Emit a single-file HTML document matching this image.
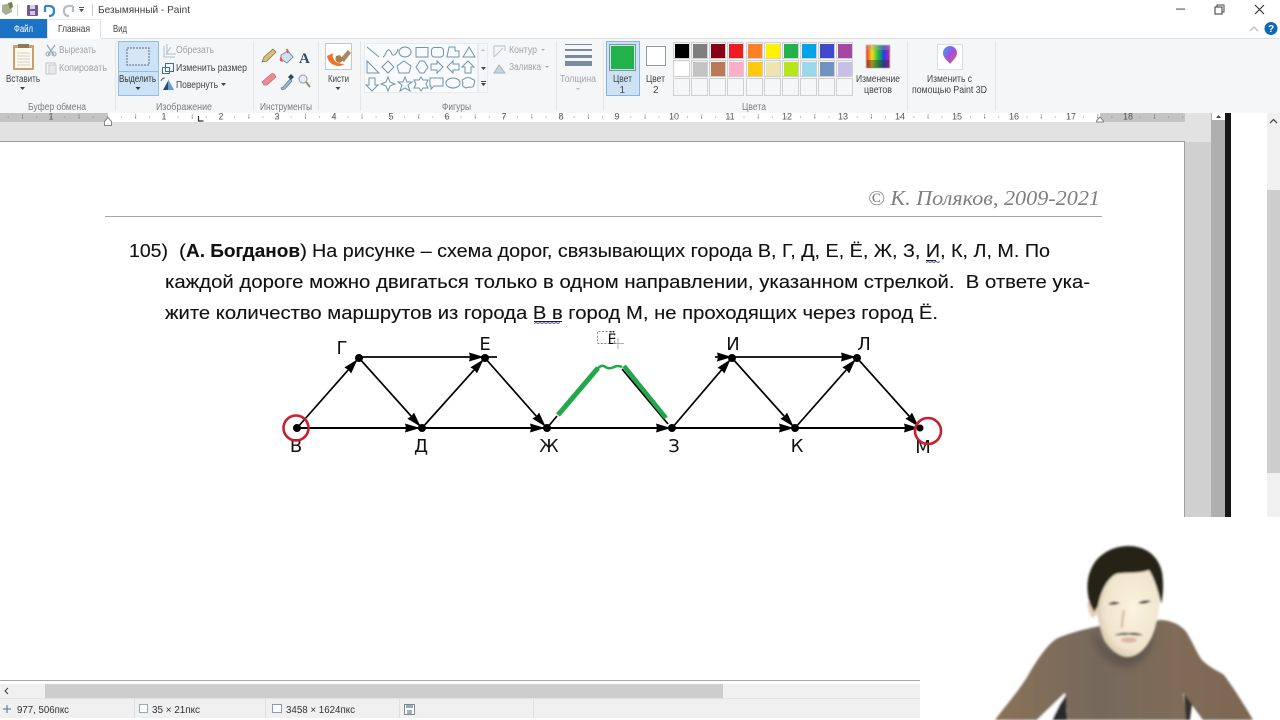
<!DOCTYPE html>
<html lang="ru"><head><meta charset="utf-8"><title>Безымянный - Paint</title>
<style>
html,body{margin:0;padding:0;background:#fff;width:1280px;height:720px;overflow:hidden}
svg{display:block}
text{white-space:pre}
.u{font-family:"Liberation Sans",sans-serif;font-size:10px;fill:#444}
.d{font-family:"Liberation Sans",sans-serif;font-size:10px;fill:#a4a4a4}
.g{font-family:"Liberation Sans",sans-serif;font-size:10px;fill:#7c7c7c}
.t{font-family:"Liberation Sans",sans-serif;font-size:18.5px;fill:#111;stroke:#111;stroke-width:.12}
.n{font-family:"DejaVu Sans",sans-serif;font-size:18px;fill:#111;text-anchor:middle}
.r{font-family:"Liberation Sans",sans-serif;font-size:9px;fill:#555;text-anchor:middle}
.i{fill:none;stroke:#8fa6b8;stroke-width:1}
</style></head><body>
<svg width="1280" height="720" viewBox="0 0 1280 720" xmlns="http://www.w3.org/2000/svg">
<defs>
<marker id="a" markerUnits="userSpaceOnUse" viewBox="0 0 15 9" refX="14" refY="4.5" markerWidth="15" markerHeight="9" orient="auto"><path d="M0 0L15 4.5L0 9L1 4.5Z" fill="#000"/></marker>
<filter id="b" x="-5%" y="-5%" width="110%" height="110%"><feGaussianBlur stdDeviation="1"/></filter>
<filter id="s" x="-30%" y="-30%" width="160%" height="160%"><feGaussianBlur stdDeviation="4"/></filter>
<filter id="q"><feGaussianBlur stdDeviation="0.35"/></filter>
<linearGradient id="sw" x1="0" y1="0" x2="1" y2="0"><stop offset="0" stop-color="#8a7258"/><stop offset=".4" stop-color="#75695c"/><stop offset=".7" stop-color="#806c58"/><stop offset="1" stop-color="#7b6651"/></linearGradient>
<radialGradient id="fc" cx=".58" cy=".45" r=".7"><stop offset="0" stop-color="#fbf3e0"/><stop offset=".65" stop-color="#f0e5cd"/><stop offset="1" stop-color="#c4b498"/></radialGradient>
<linearGradient id="rb" x1="0" y1="0" x2="1" y2="0"><stop offset="0" stop-color="#ff2020"/><stop offset=".25" stop-color="#f0e020"/><stop offset=".5" stop-color="#20c040"/><stop offset=".75" stop-color="#2040e0"/><stop offset="1" stop-color="#d020a0"/></linearGradient>
<linearGradient id="p3" x1="0" y1="0" x2="1" y2="1"><stop offset="0" stop-color="#30a8f0"/><stop offset=".5" stop-color="#a050e0"/><stop offset="1" stop-color="#f06050"/></linearGradient>
</defs>

<rect width="1280" height="720" fill="#fff"/>

<!-- title bar -->
<g filter="url(#q)">
<path d="M2 5l9-2 1 9-6 3-4-3z" fill="#a8b090"/><path d="M8 3l4-1 1 5-3 2z" fill="#70804c"/>
<rect x="17" y="4" width="1" height="12" fill="#ccc"/>
<rect x="27" y="5" width="11" height="11" rx="1" fill="#6f5a98"/><rect x="30" y="5" width="5" height="4" fill="#d8d4e6"/><rect x="30" y="11" width="5" height="4" fill="#cfc8e0"/>
<path d="M45 6v6M45 6h4q5 0 5 5t-5 5" fill="none" stroke="#2f86cc" stroke-width="2.2"/>
<path d="M73 6v6M73 6h-4q-5 0-5 5t5 5" fill="none" stroke="#b8bec4" stroke-width="2.2"/>
<path d="M79 9h5l-2.500 3z" fill="#555"/><rect x="79" y="7" width="5" height="1" fill="#555"/>
<rect x="92" y="4" width="1" height="12" fill="#ccc"/>
<text x="98" y="13" class="u" style="font-size:10.500px;fill:#404040" textLength="92" lengthAdjust="spacingAndGlyphs">Безымянный - Paint</text>
<rect x="1176" y="8.500" width="9" height="1.200" fill="#666"/>
<rect x="1215" y="7" width="7" height="7" fill="none" stroke="#444" stroke-width="1.100"/><path d="M1217 7V5h7v7h-2" fill="none" stroke="#444"/>
<path d="M1255 5l9 9M1264 5l-9 9" stroke="#333" stroke-width="1.100"/>
<path d="M1250 31l4-4 4 4" fill="none" stroke="#c4c4c4" stroke-width="1.500"/>
<circle cx="1271" cy="28.500" r="6.500" fill="#1168b8"/><text x="1271" y="32" text-anchor="middle" style="font:bold 10px 'Liberation Sans',sans-serif;fill:#fff">?</text>

<!-- tabs -->
<rect x="0" y="19" width="47" height="19" fill="#1c72c4"/>
<text x="14" y="32" class="u" style="fill:#fff" textLength="19" lengthAdjust="spacingAndGlyphs">Файл</text>
<text x="58" y="32" class="u" textLength="32" lengthAdjust="spacingAndGlyphs">Главная</text>
<text x="113" y="32" class="u" textLength="14" lengthAdjust="spacingAndGlyphs">Вид</text>

<!-- ribbon -->
<rect x="0" y="38" width="1280" height="75" fill="#f4f6f7"/>
<rect x="0" y="38" width="47" height="1" fill="#dcdedf"/><rect x="101" y="38" width="1179" height="1" fill="#dcdedf"/>
<rect x="47" y="38" width="54" height="1" fill="#fff"/>
<rect x="47" y="19" width="1" height="19" fill="#e0e2e3"/><rect x="100" y="19" width="1" height="19" fill="#e0e2e3"/>
<rect x="47" y="19" width="54" height="1" fill="#e8e9ea"/>
<g fill="#e4e6e8">
<rect x="115" y="41" width="1" height="70"/><rect x="253" y="41" width="1" height="70"/><rect x="318" y="41" width="1" height="70"/><rect x="360" y="41" width="1" height="70"/><rect x="556" y="41" width="1" height="70"/><rect x="603" y="41" width="1" height="70"/><rect x="907" y="41" width="1" height="70"/><rect x="995" y="41" width="1" height="70"/>
</g>

<!-- clipboard -->
<rect x="13" y="45" width="21" height="25" rx="1" fill="#c9a06c"/><rect x="15" y="48" width="17" height="20" fill="#fbf8f0"/>
<rect x="18" y="44" width="11" height="4" fill="#8a7a60"/>
<path d="M17 53h13M17 56h13M17 59h13M17 62h13M17 65h13" stroke="#d5d0c4"/>
<text x="6" y="82" class="u" textLength="34" lengthAdjust="spacingAndGlyphs">Вставить</text>
<path d="M20 87h5l-2.500 3z" fill="#444"/>
<path d="M47 45l7 10M55 45l-7 10" stroke="#9aa6b2" stroke-width="1.300" fill="none"/><circle cx="48" cy="54" r="2" fill="none" stroke="#9aa6b2"/><circle cx="54" cy="54" r="2" fill="none" stroke="#9aa6b2"/>
<text x="59" y="53" class="d" textLength="37" lengthAdjust="spacingAndGlyphs">Вырезать</text>
<rect x="46" y="63" width="9" height="11" fill="#f4f4f4" stroke="#c0c4c8"/><rect x="49" y="65" width="7" height="9" fill="#e6e8ea" stroke="#c8ccd0"/>
<text x="59" y="71" class="d" textLength="48" lengthAdjust="spacingAndGlyphs">Копировать</text>
<text x="28" y="110" class="g" textLength="58" lengthAdjust="spacingAndGlyphs">Буфер обмена</text>

<!-- select -->
<rect x="118.500" y="41.500" width="40" height="54" fill="#cce2f6" stroke="#96bce0"/>
<rect x="119" y="71" width="39" height="1" fill="#96bce0"/>
<rect x="127" y="48" width="22" height="17" fill="#d6e6f6" stroke="#5a6c80" stroke-dasharray="2 1"/>
<text x="119" y="82" class="u" style="fill:#333" textLength="37" lengthAdjust="spacingAndGlyphs">Выделить</text>
<path d="M135.500 87h5l-2.500 3z" fill="#333"/>
<path d="M164 46v11h11M167 44v10h9M171 47l-5 7" class="i" stroke-opacity=".7"/>
<text x="176" y="53" class="d" textLength="38" lengthAdjust="spacingAndGlyphs">Обрезать</text>
<rect x="162.500" y="67.500" width="7" height="6" fill="#fff" stroke="#3f6fa0"/><rect x="165.500" y="63.500" width="8" height="8" fill="none" stroke="#3f6fa0"/>
<text x="176" y="71" class="u" textLength="71" lengthAdjust="spacingAndGlyphs">Изменить размер</text>
<path d="M163 90l5-9v9z" fill="#30486e"/><path d="M168 90v-11l6 11z" fill="#5f9ad4"/><path d="M161 81q1-3 4-3" fill="none" stroke="#555"/>
<text x="176" y="88" class="u" textLength="42" lengthAdjust="spacingAndGlyphs">Повернуть</text>
<path d="M221 83h5l-2.500 3z" fill="#444"/>
<text x="156" y="110" class="g" textLength="56" lengthAdjust="spacingAndGlyphs">Изображение</text>

<!-- tools -->
<path d="M262 62l2-5 9-8 3 3-9 9z" fill="#d8c070" stroke="#807860" stroke-width=".8"/>
<path d="M281 55l7-4 5 6-6 6-6-4z" fill="#cfe0f0" stroke="#7a94ac"/><path d="M281 56q-2 3-1 5l3 1z" fill="#e85860"/><path d="M287 49l1 4" stroke="#d06068" stroke-width="2"/>
<text x="299" y="63" style="font:bold 15px 'Liberation Serif',serif;fill:#324a6a">A</text>
<path d="M262 82l9-8q3-1 4 1l1 2-9 8h-3z" fill="#ee8a94" stroke="#c07078" stroke-width=".7"/>
<path d="M281 88l2-1 7-8 2 2-7 8-3 1z" fill="#9fb6cc" stroke="#607890" stroke-width=".7"/><path d="M288 77l3-3 3 3-3 3z" fill="#2a4868"/>
<circle cx="303" cy="79" r="4" fill="#e6eef4" stroke="#8a9cac"/><path d="M306 82l4 5" stroke="#9a8a6c" stroke-width="2"/>
<text x="260" y="110" class="g" textLength="52" lengthAdjust="spacingAndGlyphs">Инструменты</text>

<!-- brushes -->
<rect x="325.500" y="43.500" width="26" height="26" fill="#fff" stroke="#c4c8cc"/>
<path d="M327 56q2 10 13 10l5-2q-8 0-11-4-2-4-1-7z" fill="#e8742c"/>
<path d="M340 59l8-9 3 3-7 9z" fill="#a88860"/><path d="M336 56q-2 6 4 7l3-3-3-5z" fill="#b07a48"/>
<text x="328" y="82" class="u" textLength="21" lengthAdjust="spacingAndGlyphs">Кисти</text>
<path d="M335.500 87h5l-2.500 3z" fill="#444"/>

<!-- shapes -->
<rect x="364.500" y="43.500" width="113" height="49" fill="#f8fafb" stroke="#e8eaec"/>
<g class="i" stroke="#6f93b4" fill="none" style="stroke:#6f93b4">
<path d="M367 47l12 10"/><path d="M383 57c3-1 3-8 6-7s2 6 5 5 4-6 4-6"/><ellipse cx="405" cy="52" rx="6" ry="5"/><rect x="416" y="47.500" width="12" height="9.500"/><rect x="431.500" y="47.500" width="12" height="9.500" rx="3"/><path d="M447 57l2-10h6v4h4v6z"/><path d="M463 57l6-10 6 10z"/>
<path d="M367 73V61l12 12z"/><path d="M388 61l6 6-6 6-6-6z"/><path d="M404 61l7 5-2 7h-10l-2-7z"/><path d="M420 61h4l4 6-4 6h-4l-4-6z"/><path d="M431 64h6v-3l6 6-6 6v-3h-6z"/><path d="M459 64h-6v-3l-6 6 6 6v-3h6z"/><path d="M468 61l6 6h-3v6h-6v-6h-3z"/>
<path d="M372 91l-6-6h3v-7h6v7h3z"/><path d="M388 77l2 5 5 2-5 2-2 5-2-5-5-2 5-2z"/><path d="M405 77l2 5h5l-4 3 2 6-5-3-5 3 2-6-4-3h5z"/><path d="M421 77l2 3h5l-2 4 2 4h-5l-2 3-2-3h-5l2-4-2-4h5z"/><path d="M430 78h13v8h-9l-3 3v-3h-1z"/><ellipse cx="453" cy="83" rx="7" ry="5"/><path d="M464 79q4-3 8 0 4 1 2 5 0 4-5 3l-3 1q-5-2-3-5-2-3 1-4z"/>
</g>
<path d="M481 51l2-2 2 2z" fill="#b8bcc0"/><path d="M481 67h5l-2.500 3z" fill="#444"/><path d="M481 81h5v1h-5zM481 83h5l-2.500 3z" fill="#444"/>
<rect x="478.500" y="43.500" width="9" height="49" fill="none" stroke="#e8eaec"/>
<path d="M494 57V46h11v5M494 57l9-9" class="i" style="stroke:#b8c4cc"/>
<text x="509" y="53" class="d" textLength="28" lengthAdjust="spacingAndGlyphs">Контур</text>
<path d="M541 49h4l-2 2z" fill="#b0b0b0"/>
<path d="M494 73l5-8 6 8z" fill="#c8d4e4" stroke="#a4b4c6"/>
<text x="509" y="70" class="d" textLength="32" lengthAdjust="spacingAndGlyphs">Заливка</text>
<path d="M545 66h4l-2 2z" fill="#b0b0b0"/>
<text x="442" y="110" class="g" textLength="29" lengthAdjust="spacingAndGlyphs">Фигуры</text>

<!-- thickness -->
<rect x="565" y="44" width="27" height="1" fill="#7a8aa4"/><rect x="565" y="49" width="27" height="2" fill="#7a8aa4"/><rect x="565" y="55" width="27" height="3" fill="#7a8aa4"/><rect x="565" y="61" width="27" height="5" fill="#7a8aa4"/>
<text x="560" y="82" class="d" textLength="36" lengthAdjust="spacingAndGlyphs">Толщина</text>
<path d="M576 88h4l-2 2z" fill="#b8b8b8"/>

<!-- colours -->
<rect x="606.500" y="41.500" width="33" height="54" fill="#cde2f5" stroke="#8ab4d8"/>
<rect x="609.500" y="44.500" width="26" height="26" fill="#cde2f5" stroke="#7a9c90"/>
<rect x="611" y="46" width="23" height="23" fill="#22b14c"/>
<text x="613" y="82" class="u" textLength="19" lengthAdjust="spacingAndGlyphs">Цвет</text><text x="619.500" y="93" class="u">1</text>
<rect x="646.500" y="46.500" width="19" height="19" fill="#fff" stroke="#9a9a9a"/>
<text x="646" y="82" class="u" textLength="19" lengthAdjust="spacingAndGlyphs">Цвет</text><text x="653" y="93" class="u">2</text>

<g stroke="#d0d0d0" fill="#f4f6f7">
<rect x="673.500" y="42.500" width="16" height="16"/><rect x="691.500" y="42.500" width="16" height="16"/><rect x="709.500" y="42.500" width="16" height="16"/><rect x="727.500" y="42.500" width="16" height="16"/><rect x="746.500" y="42.500" width="16" height="16"/><rect x="764.500" y="42.500" width="16" height="16"/><rect x="782.500" y="42.500" width="16" height="16"/><rect x="800.500" y="42.500" width="16" height="16"/><rect x="818.500" y="42.500" width="16" height="16"/><rect x="836.500" y="42.500" width="16" height="16"/>
<rect x="673.500" y="60.500" width="16" height="16"/><rect x="691.500" y="60.500" width="16" height="16"/><rect x="709.500" y="60.500" width="16" height="16"/><rect x="727.500" y="60.500" width="16" height="16"/><rect x="746.500" y="60.500" width="16" height="16"/><rect x="764.500" y="60.500" width="16" height="16"/><rect x="782.500" y="60.500" width="16" height="16"/><rect x="800.500" y="60.500" width="16" height="16"/><rect x="818.500" y="60.500" width="16" height="16"/><rect x="836.500" y="60.500" width="16" height="16"/>
<rect x="673.500" y="78.500" width="16" height="17"/><rect x="691.500" y="78.500" width="16" height="17"/><rect x="709.500" y="78.500" width="16" height="17"/><rect x="727.500" y="78.500" width="16" height="17"/><rect x="746.500" y="78.500" width="16" height="17"/><rect x="764.500" y="78.500" width="16" height="17"/><rect x="782.500" y="78.500" width="16" height="17"/><rect x="800.500" y="78.500" width="16" height="17"/><rect x="818.500" y="78.500" width="16" height="17"/><rect x="836.500" y="78.500" width="16" height="17"/>
</g>
<rect x="675" y="44" width="14" height="14" fill="#000"/><rect x="693" y="44" width="14" height="14" fill="#7f7f7f"/><rect x="711" y="44" width="14" height="14" fill="#880015"/><rect x="729" y="44" width="14" height="14" fill="#ed1c24"/><rect x="748" y="44" width="14" height="14" fill="#ff7f27"/><rect x="766" y="44" width="14" height="14" fill="#fff200"/><rect x="784" y="44" width="14" height="14" fill="#22b14c"/><rect x="802" y="44" width="14" height="14" fill="#00a2e8"/><rect x="820" y="44" width="14" height="14" fill="#3f48cc"/><rect x="838" y="44" width="14" height="14" fill="#a349a4"/>
<rect x="675" y="62" width="14" height="14" fill="#fff"/><rect x="693" y="62" width="14" height="14" fill="#c3c3c3"/><rect x="711" y="62" width="14" height="14" fill="#b97a57"/><rect x="729" y="62" width="14" height="14" fill="#ffaec9"/><rect x="748" y="62" width="14" height="14" fill="#ffc90e"/><rect x="766" y="62" width="14" height="14" fill="#efe4b0"/><rect x="784" y="62" width="14" height="14" fill="#b5e61d"/><rect x="802" y="62" width="14" height="14" fill="#99d9ea"/><rect x="820" y="62" width="14" height="14" fill="#7092be"/><rect x="838" y="62" width="14" height="14" fill="#c8bfe7"/>
<text x="742" y="110" class="g" textLength="24" lengthAdjust="spacingAndGlyphs">Цвета</text>

<!-- edit colours -->
<rect x="866" y="45" width="24" height="23" fill="url(#rb)" stroke="#c8c4b8"/>
<rect x="867" y="45" width="22" height="5" fill="#aaa" opacity=".35"/><rect x="867" y="60" width="22" height="8" fill="#333" opacity=".45"/>
<text x="856" y="82" class="u" textLength="44" lengthAdjust="spacingAndGlyphs">Изменение</text>
<text x="864" y="93" class="u" textLength="28" lengthAdjust="spacingAndGlyphs">цветов</text>
<!-- paint 3d -->
<rect x="937.500" y="44.500" width="25" height="25" fill="#fff" stroke="#dcdcdc"/>
<path d="M950 64c-2-3-7-6-7-11a7 7 0 0 1 14 0c0 5-5 8-7 11z" fill="url(#p3)"/>
<text x="927" y="82" class="u" textLength="45" lengthAdjust="spacingAndGlyphs">Изменить с</text>
<text x="912" y="93" class="u" textLength="75" lengthAdjust="spacingAndGlyphs">помощью Paint 3D</text>

<!-- workspace -->
<rect x="0" y="113" width="1185" height="29" fill="#e2e2e2"/>
<rect x="0" y="113" width="1185" height="9" fill="#c4c4c4"/>
<rect x="108" y="113" width="992" height="9" fill="#fff"/>
<line x1="7.700" y1="117" x2="1184" y2="117" stroke="#888" stroke-width="1" stroke-dasharray="1 13.150"/>
<line x1="22" y1="115" x2="1184" y2="115" stroke="#666" stroke-width="1" stroke-dasharray="1 55.600"/>
<line x1="22" y1="118" x2="1184" y2="118" stroke="#666" stroke-width="1" stroke-dasharray="1 55.600"/>
<g class="r">
<text x="51" y="119.500" class="r">1</text><text x="164" y="119.500" class="r">1</text><text x="221" y="119.500" class="r">2</text><text x="277" y="119.500" class="r">3</text><text x="334" y="119.500" class="r">4</text><text x="391" y="119.500" class="r">5</text><text x="447" y="119.500" class="r">6</text><text x="504" y="119.500" class="r">7</text><text x="561" y="119.500" class="r">8</text><text x="617" y="119.500" class="r">9</text><text x="674" y="119.500" class="r">10</text><text x="730" y="119.500" class="r">11</text><text x="787" y="119.500" class="r">12</text><text x="843" y="119.500" class="r">13</text><text x="900" y="119.500" class="r">14</text><text x="957" y="119.500" class="r">15</text><text x="1014" y="119.500" class="r">16</text><text x="1071" y="119.500" class="r">17</text><text x="1128" y="119.500" class="r">18</text>
</g>
<path d="M104.500 125.500v-4l3.500-4 3.500 4v4z" fill="#fff" stroke="#888"/>
<path d="M1096.500 122v-1l3.500-4 3.500 4v1z" fill="#fff" stroke="#888"/>
<path d="M198.500 116v5h5" fill="none" stroke="#333" stroke-width="1.200"/>

<rect x="0" y="142" width="1184" height="375" fill="#fff"/>
<rect x="0" y="141" width="1185" height="1" fill="#9c9c9c"/>
<rect x="1184" y="141" width="1" height="376" fill="#a0a0a0"/>
<rect x="1185" y="142" width="26" height="375" fill="#d0d0d0"/>
<rect x="1185" y="113" width="26" height="29" fill="#e2e2e2"/>
<rect x="1211" y="113" width="14" height="404" fill="#afafaf"/>
<rect x="1212" y="113" width="13" height="7" fill="#fff"/><path d="M1216 118l2.500-3 2.500 3z" fill="#444"/>
<rect x="1225" y="113" width="6" height="404" fill="#161616"/>
<rect x="1267" y="113" width="13" height="404" fill="#f0f0f0"/>
<rect x="1267" y="190" width="13" height="283" fill="#cdcdcd"/>
<path d="M1270 123l3.500-3.500 3.500 3.500" fill="none" stroke="#505050" stroke-width="1.300"/>
</g>

<!-- document -->
<text x="868" y="205" style="font:italic 21px 'Liberation Serif',serif;fill:#7f7f7f" textLength="232" lengthAdjust="spacingAndGlyphs">© К. Поляков, 2009-2021</text>
<rect x="105" y="216" width="997" height="1" fill="#a6a6a6"/>
<text x="129" y="257" class="t" textLength="39" lengthAdjust="spacingAndGlyphs">105)</text>
<text x="179" y="257" class="t" textLength="7" lengthAdjust="spacingAndGlyphs">(</text>
<text x="186" y="257" class="t" style="font-weight:bold" textLength="114" lengthAdjust="spacingAndGlyphs">А. Богданов</text>
<text x="300" y="257" class="t" textLength="7" lengthAdjust="spacingAndGlyphs">)</text>
<text x="312" y="257" class="t" textLength="738" lengthAdjust="spacingAndGlyphs">На рисунке – схема дорог, связывающих города В, Г, Д, Е, Ё, Ж, З, И, К, Л, М. По</text>
<text x="165" y="288" class="t" textLength="925" lengthAdjust="spacingAndGlyphs">каждой дороге можно двигаться только в одном направлении, указанном стрелкой.  В ответе ука-</text>
<text x="165" y="319" class="t" textLength="773" lengthAdjust="spacingAndGlyphs">жите количество маршрутов из города В в город М, не проходящих через город Ё.</text>
<path d="M534 321.500h28" stroke="#222" stroke-width="1"/>
<path d="M534 323.500l2-1 2 1 2-1 2 1 2-1 2 1 2-1 2 1 2-1 2 1 2-1 2 1 2-1" fill="none" stroke="#3a3ab0" stroke-width=".9"/>
<path d="M926 260.500h10" stroke="#222"/>
<path d="M926 262.500l2-1 2 1 2-1 2 1 2-1 2 1 2-1" fill="none" stroke="#3a3ab0" stroke-width=".9"/>

<!-- graph -->
<g stroke="#000" fill="none" stroke-width="1.700">
<line x1="297" y1="428" x2="357" y2="360" marker-end="url(#a)"/>
<line x1="297" y1="428" x2="419" y2="428" marker-end="url(#a)" stroke-width="2"/>
<line x1="359" y1="358" x2="420" y2="426" marker-end="url(#a)"/>
<line x1="359" y1="357" x2="483" y2="357" marker-end="url(#a)"/>
<line x1="483" y1="357" x2="497" y2="357"/>
<line x1="422" y1="428" x2="483" y2="360" marker-end="url(#a)"/>
<line x1="485" y1="358" x2="545" y2="426" marker-end="url(#a)"/>
<line x1="422" y1="428" x2="544" y2="428" marker-end="url(#a)" stroke-width="2"/>
<line x1="547" y1="428" x2="670" y2="428" marker-end="url(#a)" stroke-width="2"/>
<line x1="547" y1="428" x2="557" y2="416"/>
<line x1="622" y1="369" x2="668" y2="424"/>
<line x1="672" y1="428" x2="730" y2="360" marker-end="url(#a)"/>
<line x1="715" y1="357" x2="731" y2="357" marker-end="url(#a)"/>
<line x1="732" y1="357" x2="855" y2="357" marker-end="url(#a)"/>
<line x1="732" y1="358" x2="793" y2="426" marker-end="url(#a)"/>
<line x1="672" y1="428" x2="793" y2="428" marker-end="url(#a)" stroke-width="2"/>
<line x1="795" y1="428" x2="855" y2="360" marker-end="url(#a)"/>
<line x1="795" y1="428" x2="918" y2="428" marker-end="url(#a)" stroke-width="2"/>
<line x1="857" y1="358" x2="918" y2="426" marker-end="url(#a)"/>
</g>
<g fill="#000"><circle cx="297" cy="428" r="4"/><circle cx="359" cy="358" r="4"/><circle cx="422" cy="428" r="4"/><circle cx="485" cy="358" r="4"/><circle cx="547" cy="428" r="4"/><circle cx="672" cy="428" r="4"/><circle cx="732" cy="358" r="4"/><circle cx="795" cy="428" r="4"/><circle cx="857" cy="358" r="4"/><circle cx="920" cy="428" r="3.500"/></g>
<text x="342" y="354" class="n">Г</text><text x="485" y="350" class="n">Е</text><text x="733" y="350" class="n">И</text><text x="864" y="350" class="n">Л</text>
<text x="296" y="452" class="n">В</text><text x="421" y="452" class="n">Д</text><text x="549" y="452" class="n">Ж</text><text x="674" y="452" class="n">З</text><text x="797" y="452" class="n">К</text><text x="923" y="453" class="n">М</text>
<rect x="597.500" y="331.500" width="17" height="12" rx="1" fill="none" stroke="#555" stroke-width=".7" stroke-dasharray="2 1.500"/>
<text x="612" y="344" class="n" style="font-size:14px">Ё</text>
<path d="M618 338v11M613 343.500h11" stroke="#999" stroke-width=".8"/>
<path d="M558 415L598 368" fill="none" stroke="#22a84a" stroke-width="5"/>
<path d="M597 369Q601 365 604 366Q609 370 614 367Q618 365 622 367" fill="none" stroke="#22a84a" stroke-width="2.500"/>
<path d="M624 366L666 418" fill="none" stroke="#22a84a" stroke-width="4.500"/>
<circle cx="296" cy="428" r="12.500" fill="none" stroke="#c8202f" stroke-width="2.600"/>
<circle cx="928" cy="431" r="13" fill="none" stroke="#c8202f" stroke-width="2.600"/>

<!-- bottom -->
<g filter="url(#q)">
<rect x="0" y="680" width="920" height="1" fill="#a8a8a8"/>
<rect x="0" y="684" width="920" height="14" fill="#f0f0f0"/>
<rect x="45" y="684" width="678" height="14" fill="#cdcdcd"/>
<path d="M8 688l-3 3 3 3" fill="none" stroke="#444" stroke-width="1.100"/>
<rect x="0" y="698" width="920" height="20" fill="#f0f0f0"/>
<rect x="0" y="698" width="920" height="1" fill="#e2e2e2"/>
<path d="M7 705v8M3 709h8" stroke="#3f6f9a"/>
<text x="17" y="713" class="u" style="fill:#333" textLength="52" lengthAdjust="spacingAndGlyphs">977, 506пкс</text>
<rect x="134" y="699" width="1" height="19" fill="#e0e0e0"/>
<rect x="139.500" y="704.500" width="8" height="8" fill="#fff" stroke="#9aa8b4"/>
<text x="152" y="713" class="u" style="fill:#333" textLength="48" lengthAdjust="spacingAndGlyphs">35 × 21пкс</text>
<rect x="265" y="699" width="1" height="19" fill="#e0e0e0"/>
<rect x="272.500" y="704.500" width="9" height="8" fill="#fff" stroke="#7ea0bc"/>
<text x="286" y="713" class="u" style="fill:#333" textLength="69" lengthAdjust="spacingAndGlyphs">3458 × 1624пкс</text>
<rect x="399" y="699" width="1" height="19" fill="#e0e0e0"/>
<rect x="404.500" y="704.500" width="10" height="10" fill="#fff" stroke="#7a8a98"/><rect x="406" y="705" width="7" height="3" fill="#9aa8b4"/><rect x="407" y="710" width="5" height="4" fill="#a0b0bc"/>
<rect x="533" y="699" width="1" height="19" fill="#e0e0e0"/>
</g>

<!-- webcam -->
<g filter="url(#b)">
<path d="M995 720C1006 705 1020 690 1030 672C1040 655 1050 642 1058 638C1072 632 1090 628 1100 626L1160 620C1170 620 1182 625 1187 633C1194 645 1198 655 1202 660C1210 668 1220 672 1224 675C1235 690 1245 706 1253 720H1203L1183 693 1187 720H1067L1065 693 1037 720Z" fill="url(#sw)"/>
<path d="M1065 693L1037 720H1058L1067 712Z" fill="#fff"/>
<path d="M1060 704L1066 695 1067 720H1052Z" fill="#2c2c2c"/>
<path d="M1184 694L1192 704 1190 720H1186Z" fill="#333"/>
</g>
<g filter="url(#s)">
<path d="M1092 630C1094 650 1104 664 1125 667C1140 667 1150 656 1156 630L1135 650 1110 650Z" fill="#5e564e"/>
</g>
<g filter="url(#b)">
<path d="M1089 600Q1085 606 1092 618L1098 614 1096 600Z" fill="#e4d0b4"/>
<path d="M1097 592C1096 610 1098 625 1104 640C1110 650 1120 658 1129 657C1140 656 1150 645 1155 628C1158 618 1160 606 1160 590L1150 568 1110 572Z" fill="url(#fc)"/>
<path d="M1090 604C1086 590 1086 575 1095 562C1104 550 1118 546 1128 546C1145 546 1158 555 1162 572C1164 585 1163 597 1161 604C1158 590 1154 578 1149 570C1140 574 1125 572 1116 574C1108 578 1101 590 1098 606L1094 612Z" fill="#282318"/>
<path d="M1108 604q6-4 12-1q-6 3-12 1z" fill="#2a231d"/>
<path d="M1138 603q6-4 13-2q-6 4-13 2z" fill="#2a231d"/>
<path d="M1114 635q8-3 15-2q8-1 14 2q-7 1-14-.5q-7 1-15 .5z" fill="#3a3028"/>
<ellipse cx="1129" cy="640" rx="8" ry="2.800" fill="#d9b8a4"/>
<path d="M1124 610Q1122 620 1122 628" stroke="#cfc0a4" stroke-width="2.500" fill="none"/>
</g>
</svg>
</body></html>
